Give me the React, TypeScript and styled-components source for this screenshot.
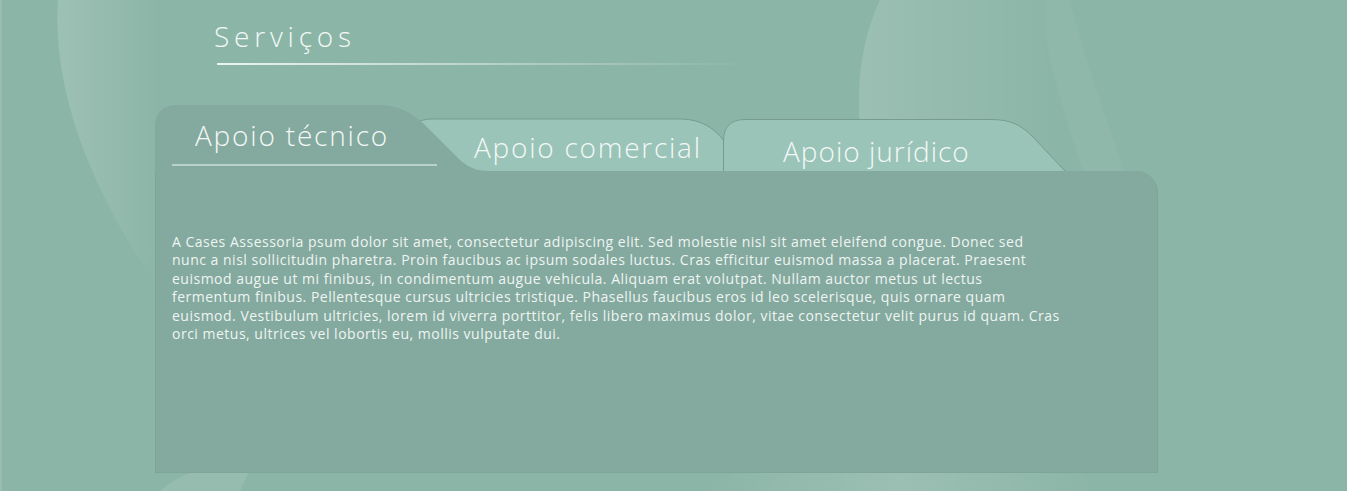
import React from 'react';
import styled, {createGlobalStyle} from 'styled-components';

const GlobalStyle = createGlobalStyle`
  html, body {
    margin: 0;
    padding: 0;
    background: #8bb5a7;
  }
  body {
    font-family: "Open Sans", "Lato", sans-serif;
  }
`;

const bodyLines = [
  'A Cases Assessoria psum dolor sit amet, consectetur adipiscing elit. Sed molestie nisl sit amet eleifend congue. Donec sed',
  'nunc a nisl sollicitudin pharetra. Proin faucibus ac ipsum sodales luctus. Cras efficitur euismod massa a placerat. Praesent',
  'euismod augue ut mi finibus, in condimentum augue vehicula. Aliquam erat volutpat. Nullam auctor metus ut lectus',
  'fermentum finibus. Pellentesque cursus ultricies tristique. Phasellus faucibus eros id leo scelerisque, quis ornare quam',
  'euismod. Vestibulum ultricies, lorem id viverra porttitor, felis libero maximus dolor, vitae consectetur velit purus id quam. Cras',
  'orci metus, ultrices vel lobortis eu, mollis vulputate dui.',
];

type TabDef = {
  label: string;
  width: number;
  height: number;
  offset: number;
  padLeft: number;
  padTop: number;
  spacing: number;
  layer: number;
  active?: boolean;
  fill: string;
  outline?: string;
};

const tabs: TabDef[] = [
  {
    label: 'Apoio técnico',
    width: 335,
    height: 66,
    offset: 0,
    padLeft: 40,
    padTop: 14,
    spacing: 1.8,
    layer: 3,
    active: true,
    fill: 'M0,66 V22 Q0,0 24,0 H222 C244,0 258,8 272,22 L305,55 C314,63 322,66 335,66 Z',
  },
  {
    label: 'Apoio comercial',
    width: 314,
    height: 52,
    offset: -80,
    padLeft: 64,
    padTop: 12,
    spacing: 1.75,
    layer: 1,
    fill: 'M0,52 V20 Q0,0 22,0 H270 C292,0 305,10 314,22 V52 Z',
    outline: 'M0,20 Q0,0 22,0 H270 C292,0 305,10 314,22',
  },
  {
    label: 'Apoio jurídico',
    width: 342,
    height: 52,
    offset: -1,
    padLeft: 60,
    padTop: 16,
    spacing: 1,
    layer: 2,
    fill: 'M0,52 V22 Q0,0 22,0 H268 C288,0 298,6 310,18 L342,52 Z',
    outline: 'M0.5,52 V22 Q0.5,0.5 22,0.5 H268 C288,0.5 298,6 310,18 L342,52',
  },
];

const App = () => {
  return (
    <Page>
      <GlobalStyle />
      <Backdrop viewBox="0 0 1347 491" preserveAspectRatio="none">
        <defs>
          <linearGradient id="swoopLeft" x1="0" y1="0" x2="1" y2="0">
            <stop offset="0" stopColor="#ffffff" stopOpacity="0.16" />
            <stop offset="1" stopColor="#ffffff" stopOpacity="0" />
          </linearGradient>
          <linearGradient id="swoopRight" x1="0" y1="0" x2="1" y2="0">
            <stop offset="0" stopColor="#ffffff" stopOpacity="0.14" />
            <stop offset="1" stopColor="#ffffff" stopOpacity="0" />
          </linearGradient>
          <linearGradient id="swoopBottom" x1="0" y1="0" x2="1" y2="0">
            <stop offset="0" stopColor="#ffffff" stopOpacity="0" />
            <stop offset="0.5" stopColor="#ffffff" stopOpacity="0.14" />
            <stop offset="1" stopColor="#ffffff" stopOpacity="0" />
          </linearGradient>
        </defs>
        <path d="M58,0 C52,90 90,190 160,290 L160,0 Z" fill="url(#swoopLeft)" />
        <path d="M880,0 C856,50 852,120 870,180 L1060,180 C1050,120 1046,60 1046,0 Z" fill="url(#swoopRight)" />
        <path d="M1046,40 C1056,90 1072,140 1090,190 L1130,190 C1112,130 1090,80 1070,0 L1046,0 Z" fill="#ffffff" opacity="0.035" />
        <path d="M160,491 C175,478 190,472 200,470 L250,470 L240,491 Z" fill="#ffffff" opacity="0.1" />
        <path d="M700,491 L740,470 L1080,470 L1100,491 Z" fill="url(#swoopBottom)" />
        <rect x="0" y="0" width="2" height="491" fill="#ffffff" opacity="0.12" />
      </Backdrop>

      <Section>
        <TitleBlock>
          <Title>Serviços</Title>
          <TitleRule />
        </TitleBlock>

        <TabRow>
          {tabs.map((tab) => (
            <Tab
              key={tab.label}
              $width={tab.width}
              $height={tab.height}
              $offset={tab.offset}
              $layer={tab.layer}
              $padLeft={tab.padLeft}
              $padTop={tab.padTop}
            >
              <TabShape viewBox={`0 0 ${tab.width} ${tab.height}`}>
                <path d={tab.fill} fill={tab.active ? '#84a99e' : '#9ac4b8'} />
                {tab.outline && (
                  <path d={tab.outline} fill="none" stroke="#779c8f" strokeWidth="1" />
                )}
              </TabShape>
              <TabLabel $spacing={tab.spacing}>{tab.label}</TabLabel>
              {tab.active && <ActiveRule />}
            </Tab>
          ))}
        </TabRow>

        <Panel>
          <Copy>
            {bodyLines.map((line, i) => (
              <React.Fragment key={i}>
                {line}
                {i < bodyLines.length - 1 && <br />}
              </React.Fragment>
            ))}
          </Copy>
        </Panel>
      </Section>
    </Page>
  );
};

const Page = styled.div`
  position: relative;
  width: 1347px;
  height: 491px;
  overflow: hidden;
  background: #8bb5a7;
`;

const Backdrop = styled.svg`
  position: absolute;
  inset: 0;
  width: 100%;
  height: 100%;
  pointer-events: none;
`;

const Section = styled.div`
  position: relative;
  padding: 0 0 0 155px;
  display: flex;
  flex-direction: column;
`;

const TitleBlock = styled.div`
  display: flex;
  flex-direction: column;
  padding: 17px 0 0 59px;
`;

const Title = styled.h1`
  margin: 0;
  font-family: "Open Sans", sans-serif;
  font-weight: 300;
  font-size: 28px;
  line-height: 38px;
  letter-spacing: 4.8px;
  color: #f3f8f6;
`;

const TitleRule = styled.div`
  margin: 8px 0 0 3px;
  width: 535px;
  height: 2px;
  background: linear-gradient(to right, rgba(255, 255, 255, 0.85), rgba(255, 255, 255, 0.35) 55%, rgba(255, 255, 255, 0));
`;

const TabRow = styled.div`
  display: flex;
  align-items: flex-end;
  height: 66px;
  margin-top: 40px;
`;

const Tab = styled.div<{
  $width: number;
  $height: number;
  $offset: number;
  $layer: number;
  $padLeft: number;
  $padTop: number;
}>`
  position: relative;
  z-index: ${(p) => p.$layer};
  flex: none;
  width: ${(p) => p.$width}px;
  height: ${(p) => p.$height}px;
  margin-left: ${(p) => p.$offset}px;
  padding: ${(p) => p.$padTop}px 0 0 ${(p) => p.$padLeft}px;
  box-sizing: border-box;
`;

const TabShape = styled.svg`
  position: absolute;
  inset: 0;
  width: 100%;
  height: 100%;
  overflow: visible;
`;

const TabLabel = styled.span<{$spacing: number}>`
  position: relative;
  display: block;
  font-family: "Open Sans", sans-serif;
  font-weight: 300;
  font-size: 28px;
  line-height: 32px;
  letter-spacing: ${(p) => p.$spacing}px;
  color: #f3f8f6;
  white-space: nowrap;
`;

const ActiveRule = styled.div`
  position: absolute;
  left: 17px;
  top: 59px;
  width: 265px;
  height: 2px;
  background: rgba(220, 236, 230, 0.6);
`;

const Panel = styled.div`
  position: relative;
  z-index: 4;
  width: 1003px;
  height: 302px;
  box-sizing: border-box;
  background: #84a99e;
  border: 1px solid #7fa498;
  border-top: none;
  border-top-right-radius: 22px;
  padding: 62px 0 0 16px;
`;

const Copy = styled.p`
  margin: 0;
  font-family: "Open Sans", sans-serif;
  font-weight: 400;
  font-size: 14px;
  line-height: 18.4px;
  letter-spacing: 0.5px;
  color: #eef5f2;
  white-space: nowrap;
`;

export default App;
